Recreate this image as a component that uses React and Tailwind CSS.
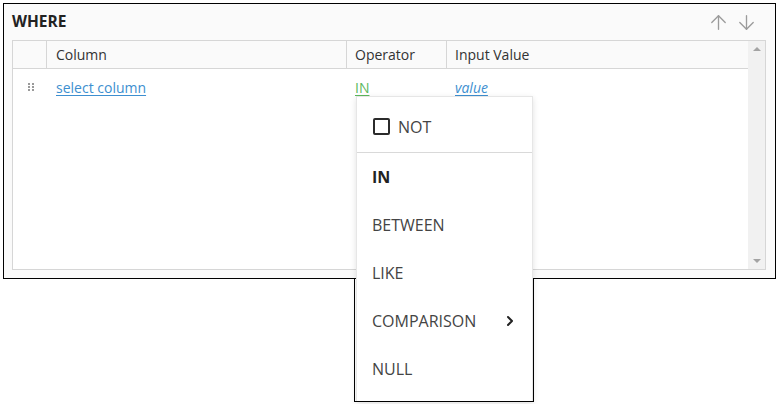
import React from 'react';
import { ArrowUp, ArrowDown, ChevronRight } from 'lucide-react';

const FONT = { fontFamily: '"Open Sans", "Noto Sans", sans-serif' };

const MENU_ITEMS = ['IN', 'BETWEEN', 'LIKE', 'COMPARISON', 'NULL'];

function DragHandle() {
  return (
    <svg width="6" height="9" viewBox="0 0 6 9" className="text-[#9a9a9a]" aria-hidden="true">
      {[0, 3, 6].map((y) => (
        <g key={y}>
          <rect x="0" y={y} width="2" height="2" fill="currentColor" />
          <rect x="4" y={y} width="2" height="2" fill="currentColor" />
        </g>
      ))}
    </svg>
  );
}

function OperatorMenu() {
  return (
    <div className="absolute left-[356px] top-[96px] w-[177px] h-[306px] bg-white border border-[#e6e6e6] shadow-[0_2px_6px_rgba(0,0,0,0.12)] z-10">
      <div className="h-[56px] flex items-center pl-[16px] gap-[8px] border-b border-[#d9d9d9] pt-[4px]">
        <span className="w-[17px] h-[17px] border-2 border-[#2b2b2b] rounded-[2px]" />
        <span className="text-[16px] text-[#444]">NOT</span>
      </div>
      <ul>
        {MENU_ITEMS.map((item) => (
          <li
            key={item}
            className={`h-[48px] flex items-center justify-between pl-[15px] pr-[14px] text-[16px] ${
              item === 'IN' ? 'font-bold text-[#222]' : 'text-[#444]'
            }`}
          >
            <span>{item}</span>
            {item === 'COMPARISON' && <ChevronRight className="w-4 h-4 text-[#222]" strokeWidth={3} />}
          </li>
        ))}
      </ul>
    </div>
  );
}

export default function App() {
  return (
    <div className="relative w-[778px] h-[404px] bg-white overflow-hidden" style={FONT}>
      <div className="ml-[3px] mt-[3px] w-[773px] h-[276px] border border-black bg-[#fafafa] flex flex-col">
        <div className="h-[36px] flex items-center justify-between pl-[8px] pr-[17px]">
          <span className="text-[15.5px] font-bold text-[#222]">WHERE</span>
          <div className="flex items-center gap-[5px] text-[#9b9b9b]">
            <ArrowUp className="w-[23px] h-[23px]" strokeWidth={1.4} />
            <ArrowDown className="w-[23px] h-[23px]" strokeWidth={1.4} />
          </div>
        </div>

        <div className="ml-[8px] w-[754px] h-[230px] border border-[#d6d6d6] bg-white flex">
          <div className="flex-1 flex flex-col">
            <div className="h-[28px] flex border-b border-[#d6d6d6] bg-[#fafafa] text-[14px] text-[#333]">
              <div className="w-[34px] border-r border-[#d6d6d6]" />
              <div className="w-[300px] border-r border-[#d6d6d6] flex items-center pl-[9px]">Column</div>
              <div className="w-[100px] border-r border-[#d6d6d6] flex items-center pl-[8px]">Operator</div>
              <div className="flex-1 flex items-center pl-[8px]">Input Value</div>
            </div>
            <div className="h-[36px] flex text-[14px]">
              <div className="w-[34px] flex items-center justify-center pl-[2px]">
                <DragHandle />
              </div>
              <div className="w-[300px] flex items-center pl-[9px]">
                <span className="text-[#3d8fd0] underline underline-offset-2">select column</span>
              </div>
              <div className="w-[100px] flex items-center pl-[8px]">
                <span className="text-[#5cb85c] underline underline-offset-2">IN</span>
              </div>
              <div className="flex-1 flex items-center pl-[8px]">
                <span className="text-[#3d8fd0] italic underline underline-offset-2">value</span>
              </div>
            </div>
          </div>
          <div className="w-[17px] bg-[#f1f1f1] flex flex-col justify-between items-center py-[6px]">
            <svg width="8" height="4" viewBox="0 0 8 4" aria-hidden="true">
              <path d="M0 4 L4 0 L8 4 Z" fill="#a3a3a3" />
            </svg>
            <svg width="8" height="4" viewBox="0 0 8 4" aria-hidden="true">
              <path d="M0 0 L8 0 L4 4 Z" fill="#a3a3a3" />
            </svg>
          </div>
        </div>
      </div>

      <OperatorMenu />
      <div className="absolute left-[354px] top-[278px] w-[180px] h-[124px] border-l border-r border-b border-black z-20 pointer-events-none" />
    </div>
  );
}
